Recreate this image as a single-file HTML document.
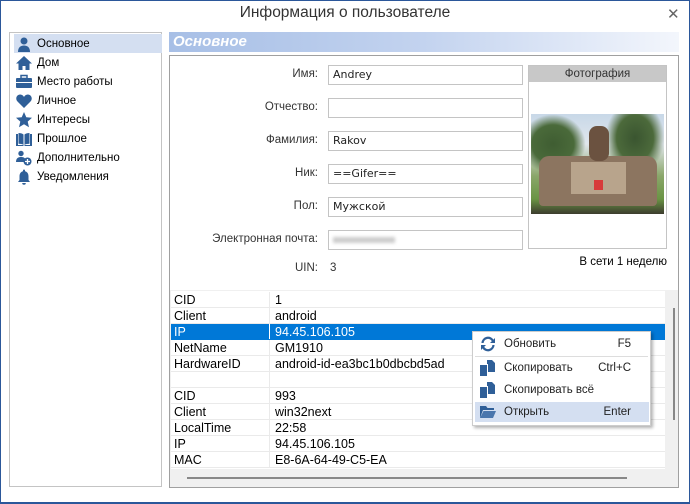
<!DOCTYPE html>
<html><head><meta charset="utf-8"><style>
*{box-sizing:border-box;margin:0;padding:0}
body{width:690px;height:504px;overflow:hidden;background:#fff;font-family:"Liberation Sans","DejaVu Sans",sans-serif;font-size:12px;color:#000;position:relative}
.a{position:absolute}
.win{left:0;top:0;width:690px;height:504px;border-left:1px solid #2b579a;border-right:1px solid #2b579a;border-bottom:2px solid #2b579a;border-top:1px solid #2b579a}
.nav{left:9px;top:32px;width:153px;height:455px;border:1px solid #c4c4c4}
.ni{position:absolute;left:4px;height:19px;width:148px;line-height:20px;padding-left:23px;font-size:11.5px}
.ni svg{position:absolute;left:2px;top:2px}
.lbl{position:absolute;right:372px;font-size:11.5px;color:#333;text-align:right}
.inp{position:absolute;left:328px;width:195px;height:20px;border:1px solid #c4c4c4;padding-left:4px;line-height:18px;font-family:"DejaVu Sans",sans-serif;font-size:11px;color:#222}
.row{position:absolute;left:171px;width:494px;height:16px;line-height:16px;border-bottom:1px solid #eaeaea;font-size:12.5px}
.row span{position:absolute;left:3px}
.row b{font-weight:normal;position:absolute;left:104px}
.row i{position:absolute;left:98px;top:0;bottom:0;border-left:1px solid #eaeaea}
.mi{position:absolute;left:2px;width:174px;height:20px;line-height:20px;padding-left:29px;font-size:11.5px;color:#222}
.mi .k{position:absolute;right:18px;top:0}
.mi svg{position:absolute;left:5px;top:2px}
</style></head><body>
<div class="a win"></div>
<div class="a" style="left:0;top:4px;width:690px;text-align:center;font-size:15.5px;color:#333">Информация о пользователе</div>
<div class="a" style="left:667px;top:5px;font-size:15px;color:#666;font-weight:bold">✕</div>

<div class="a nav">
<div class="ni" style="top:1px;background:#d4dff1">Основное<svg width="16" height="16" viewBox="0 0 16 16"><circle cx="8" cy="5" r="3.5" fill="#2f5f98"/><path d="M2 16c0-5 3-6.5 6-6.5s6 1.5 6 6.5z" fill="#2f5f98"/></svg></div>
<div class="ni" style="top:20px">Дом<svg width="16" height="16" viewBox="0 0 16 16"><path d="M8 1L0 8.5h2.5V15h4v-4h3v4h4V8.5H16z" fill="#2f5f98"/></svg></div>
<div class="ni" style="top:39px">Место работы<svg width="16" height="16" viewBox="0 0 16 16"><rect x="0" y="4" width="16" height="10" rx="1" fill="#2f5f98"/><rect x="5" y="1.5" width="6" height="3" fill="none" stroke="#2f5f98" stroke-width="1.5"/><rect x="0" y="8" width="16" height="1" fill="#fff"/></svg></div>
<div class="ni" style="top:58px">Личное<svg width="16" height="16" viewBox="0 0 16 16"><path d="M8 15L1.5 8.5C-1 6 .5 1.5 4.2 1.5 6 1.5 7.3 2.7 8 4c.7-1.3 2-2.5 3.8-2.5 3.7 0 5.2 4.5 2.7 7z" fill="#2f5f98"/></svg></div>
<div class="ni" style="top:77px">Интересы<svg width="16" height="16" viewBox="0 0 16 16"><path d="M8 0l2.3 5.3 5.7.5-4.3 3.8 1.3 5.6L8 12.2 3 15.2l1.3-5.6L0 5.8l5.7-.5z" fill="#2f5f98"/></svg></div>
<div class="ni" style="top:96px">Прошлое<svg width="16" height="16" viewBox="0 0 16 16"><path d="M0 3h2v11h5.5v1H0zM16 3h-2v11H8.5v1H16zM2.5 2c2 0 4 .5 5 1.5V14c-1-1-3-1.3-5-1.3zM13.5 2c-2 0-4 .5-5 1.5V14c1-1 3-1.3 5-1.3z" fill="#2f5f98"/></svg></div>
<div class="ni" style="top:115px">Дополнительно<svg width="16" height="16" viewBox="0 0 16 16"><circle cx="5" cy="3.5" r="2.7" fill="#2f5f98"/><path d="M0 12c0-4 2.5-5 5-5s3 .5 4 1.5V12z" fill="#2f5f98"/><circle cx="11.5" cy="11.5" r="4" fill="#2f5f98"/><path d="M11.5 9v5M9 11.5h5" stroke="#fff" stroke-width="1.3"/></svg></div>
<div class="ni" style="top:134px">Уведомления<svg width="16" height="16" viewBox="0 0 16 16"><path d="M8 0.5a1 1 0 011 1v.8c2.5.6 3.5 2.7 3.5 5.2v3.5L14 13H2l1.5-2V7.5C3.5 5 4.5 2.9 7 2.3v-.8a1 1 0 011-1zM6.2 14h3.6a1.8 1.8 0 01-3.6 0z" fill="#2f5f98"/></svg></div>
</div>

<div class="a" style="left:169px;top:32px;width:510px;height:20px;background:linear-gradient(90deg,#a7bfe6 0%,#c3d3ef 50%,#f3f6fc 100%)"></div>
<div class="a" style="left:173px;top:33px;color:#fff;font-weight:bold;font-style:italic;font-size:15px">Основное</div>

<div class="a" style="left:169px;top:55px;width:510px;height:433px;border:1px solid #a0a0a0;background:#fff"></div>

<div class="lbl" style="top:68px">Имя:</div><div class="inp" style="top:65px">Andrey</div>
<div class="lbl" style="top:101px">Отчество:</div><div class="inp" style="top:98px"></div>
<div class="lbl" style="top:134px">Фамилия:</div><div class="inp" style="top:131px">Rakov</div>
<div class="lbl" style="top:167px">Ник:</div><div class="inp" style="top:164px">==Gifer==</div>
<div class="lbl" style="top:200px">Пол:</div><div class="inp" style="top:197px">Мужской</div>
<div class="lbl" style="top:233px">Электронная почта:</div><div class="inp" style="top:230px"><div style="margin-top:6px;width:62px;height:6px;background:#ccc;filter:blur(1.5px)"></div></div>
<div class="lbl" style="top:262px">UIN:</div><div class="a" style="left:330px;top:262px;font-size:11.5px;color:#333">3</div>

<div class="a" style="left:528px;top:65px;width:139px;height:184px;border:1px solid #c4c4c4"></div>
<div class="a" style="left:529px;top:66px;width:137px;height:16px;background:#c8c8c8;text-align:center;line-height:16px;font-size:11.5px;color:#333">Фотография</div>
<div class="a" style="left:531px;top:114px;width:133px;height:100px;overflow:hidden;background:linear-gradient(180deg,#c8d8e8 0%,#e0e6ec 30%,#8aa66a 62%,#6a9444 85%,#3c3c2e 100%)">
 <div class="a" style="left:0;top:0;width:55px;height:60px;background:radial-gradient(ellipse at 40% 50%,#3f5d32 0%,#4a6a3a 45%,transparent 70%)"></div>
 <div class="a" style="left:75px;top:0;width:58px;height:60px;background:radial-gradient(ellipse at 50% 40%,#3a5530 0%,#4c6a3b 45%,transparent 72%)"></div>
 <div class="a" style="left:8px;top:42px;width:118px;height:50px;background:#8c7560;border-radius:10px 10px 4px 4px"></div>
 <div class="a" style="left:58px;top:12px;width:20px;height:35px;background:#6b5240;border-radius:8px"></div>
 <div class="a" style="left:40px;top:48px;width:55px;height:32px;background:#b8a48c"></div>
 <div class="a" style="left:63px;top:66px;width:9px;height:10px;background:#d73a3a"></div>
</div>
<div class="a" style="right:23px;top:256px;font-size:11.5px">В сети 1 неделю</div>

<div class="a" style="left:170px;top:290px;width:508px;height:197px;background:#f0f0f0"></div>
<div class="a" style="left:171px;top:291px;width:494px;height:178px;background:#fff"></div>
<div class="row" style="top:292px"><span>CID</span><i></i><b>1</b></div>
<div class="row" style="top:308px"><span>Client</span><i></i><b>android</b></div>
<div class="row" style="top:324px;background:#0078d7;color:#fff;border-color:#0078d7"><span>IP</span><i style="border-color:#fff"></i><b>94.45.106.105</b></div>
<div class="row" style="top:340px"><span>NetName</span><i></i><b>GM1910</b></div>
<div class="row" style="top:356px"><span>HardwareID</span><i></i><b>android-id-ea3bc1b0dbcbd5ad</b></div>
<div class="row" style="top:372px"><span></span><i></i><b></b></div>
<div class="row" style="top:388px"><span>CID</span><i></i><b>993</b></div>
<div class="row" style="top:404px"><span>Client</span><i></i><b>win32next</b></div>
<div class="row" style="top:420px"><span>LocalTime</span><i></i><b>22:58</b></div>
<div class="row" style="top:436px"><span>IP</span><i></i><b>94.45.106.105</b></div>
<div class="row" style="top:452px"><span>MAC</span><i></i><b>E8-6A-64-49-C5-EA</b></div>
<div class="a" style="left:673px;top:308px;width:2px;height:112px;background:#888"></div>
<div class="a" style="left:187px;top:477px;width:440px;height:2px;background:#888"></div>

<div class="a" style="left:472px;top:331px;width:179px;height:95px;background:#fff;border:1px solid #ccc;box-shadow:2px 2px 3px rgba(0,0,0,.3)">
 <div class="mi" style="top:2px">Обновить<span class="k">F5</span><svg width="16" height="16" viewBox="0 0 16 16"><path d="M2.5 7A5.5 5.5 0 0113 5" fill="none" stroke="#2f5f98" stroke-width="2.2"/><path d="M15 2v5h-5z" fill="#2f5f98"/><path d="M13.5 9A5.5 5.5 0 013 11" fill="none" stroke="#2f5f98" stroke-width="2.2"/><path d="M1 14V9h5z" fill="#2f5f98"/></svg></div>
 <div class="a" style="left:2px;top:24px;width:173px;height:1px;background:#ddd"></div>
 <div class="mi" style="top:26px">Скопировать<span class="k">Ctrl+C</span><svg width="16" height="16" viewBox="0 0 16 16"><path d="M0 5h7v11H0z" fill="#2f5f98"/><path d="M7 0h5l3 3v9H8V4H7z" fill="#2f5f98"/></svg></div>
 <div class="mi" style="top:48px">Скопировать всё<svg width="16" height="16" viewBox="0 0 16 16"><path d="M0 5h7v11H0z" fill="#2f5f98"/><path d="M7 0h5l3 3v9H8V4H7z" fill="#2f5f98"/></svg></div>
 <div class="mi" style="top:70px;background:#d4dff1">Открыть<span class="k">Enter</span><svg width="16" height="16" viewBox="0 0 16 16"><path d="M0 2h6l1.5 2H14v2H3L0 14z" fill="#2f5f98"/><path d="M3.5 7H16l-3 7H0z" fill="#4a76ad"/></svg></div>
</div>
</body></html>
